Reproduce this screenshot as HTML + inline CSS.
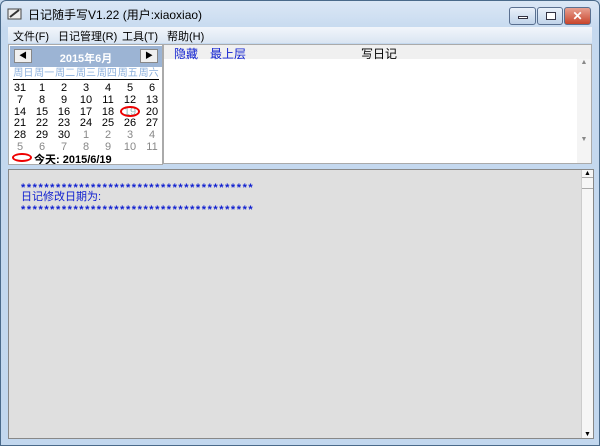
<!DOCTYPE html>
<html><head><meta charset="utf-8"><style>
*{margin:0;padding:0;box-sizing:border-box}
body{width:600px;height:446px;overflow:hidden;background:#c4d8ee;font-family:"Liberation Sans","Noto Sans CJK SC",sans-serif;font-size:12px;position:relative}
.frame{position:absolute;left:0;top:0;width:600px;height:446px;border:1px solid #4a6a8a;border-radius:6px 6px 0 0;background:linear-gradient(#dbe7f5,#c5d9ef 30px,#c2d7ee);}
.title{position:absolute;left:28px;top:6px;font-size:12px;color:#000}
.btn{position:absolute;top:7px;height:18px;border:1px solid #5a7090;border-radius:3px;background:linear-gradient(#eaf1fa,#c0d3ea)}
.menu{position:absolute;left:8px;top:27px;width:584px;height:16px;background:linear-gradient(#f2f6fb,#dae5f2);}
.menu span{position:absolute;top:1px;font-size:11px}
.cal{position:absolute;left:8px;top:44px;width:155px;height:121px;background:#fff;border:1px solid #aaa;overflow:hidden}
.calh{position:absolute;left:1px;top:1px;width:152px;height:21px;background:#9cb4d4}
.cb{position:absolute;top:3px;width:18px;height:14px;background:#f0f0f0;border:1px solid #888;font-size:8px;text-align:center;line-height:12px}
.grid{position:absolute;left:0;top:22px;width:154px}
.grid div{display:flex;height:11.8px}
.grid span{width:22px;text-align:center;font-size:11px;line-height:12px}
.g{color:#888}
.right{position:absolute;left:163px;top:44px;width:429px;height:120px;background:#fff;border:1px solid #aaa}
.rh{position:absolute;left:0;top:0;width:100%;height:14px;background:#f0f0f0}
.bot{position:absolute;left:8px;top:169px;width:586px;height:270px;background:#dfdfdf;border:1px solid #888}
.blue{color:#1020d0;font-size:11px;position:absolute;left:12px;line-height:12px}
.ast{font-weight:bold;letter-spacing:1.55px}
</style></head><body>
<div class="frame"></div>
<svg style="position:absolute;left:7px;top:7px" width="16" height="14"><rect x="1" y="2" width="13" height="10" fill="#eee" stroke="#444"/><path d="M3 10 L12 3" stroke="#333" stroke-width="2"/></svg>
<div class="title">日记随手写V1.22 (用户:xiaoxiao)</div>
<div class="btn" style="left:509px;width:27px"><div style="margin:8px 8px;width:10px;height:3px;background:#fff;border:1px solid #334"></div></div>
<div class="btn" style="left:537px;width:26px"><div style="margin:4px 8px;width:10px;height:8px;border:1px solid #334;background:#fff"></div></div>
<div class="btn" style="left:564px;width:27px;background:linear-gradient(#e8a090,#c8452c);color:#fff;text-align:center;font-weight:bold;line-height:16px">✕</div>
<div class="menu"><span style="left:5px">文件(F)</span><span style="left:50px">日记管理(R)</span><span style="left:114px">工具(T)</span><span style="left:159px">帮助(H)</span></div>
<div class="cal">
<div class="calh"><div class="cb" style="left:4px">◀</div><div style="position:absolute;left:0;width:152px;text-align:center;top:4px;color:#fff;font-weight:bold;font-size:11px">2015年6月</div><div class="cb" style="left:130px">▶</div></div>
<div class="grid">
<div style="color:#8cb0dc;border-bottom:1px solid #000;margin:0 4px 2px 4px;height:13px"><span style="font-size:10px;line-height:13px">周日</span><span style="font-size:10px;line-height:13px">周一</span><span style="font-size:10px;line-height:13px">周二</span><span style="font-size:10px;line-height:13px">周三</span><span style="font-size:10px;line-height:13px">周四</span><span style="font-size:10px;line-height:13px">周五</span><span style="font-size:10px;line-height:13px">周六</span></div>
<div><span>31</span><span>1</span><span>2</span><span>3</span><span>4</span><span>5</span><span>6</span></div>
<div><span>7</span><span>8</span><span>9</span><span>10</span><span>11</span><span>12</span><span>13</span></div>
<div><span>14</span><span>15</span><span>16</span><span>17</span><span>18</span><span style="color:#9bb;position:relative">19<i style="position:absolute;left:1px;top:0;width:20px;height:11px;border:2px solid #e00;border-radius:50%"></i></span><span>20</span></div>
<div><span>21</span><span>22</span><span>23</span><span>24</span><span>25</span><span>26</span><span>27</span></div>
<div><span>28</span><span>29</span><span>30</span><span class="g">1</span><span class="g">2</span><span class="g">3</span><span class="g">4</span></div>
<div><span class="g">5</span><span class="g">6</span><span class="g">7</span><span class="g">8</span><span class="g">9</span><span class="g">10</span><span class="g">11</span></div>
</div>
<div style="position:absolute;left:3px;top:108px;width:20px;height:9px;border:2px solid #e00;border-radius:50%"></div>
<div style="position:absolute;left:25px;top:106px;font-weight:bold;font-size:11px">今天: 2015/6/19</div>
</div>
<div class="right"><div class="rh"></div>
<span style="position:absolute;left:10px;top:0;color:#1020d0">隐藏</span><span style="position:absolute;left:46px;top:0;color:#1020d0">最上层</span><span style="position:absolute;left:197px;top:0">写日记</span>
<div style="position:absolute;right:0;top:14px;width:14px;height:104px;background:#f4f4f4;font-size:7px;color:#888;text-align:center">▲<br><br><br><br><br><br><br><br><br><br><br>▼</div>
</div>
<div class="bot">
<div class="blue ast" style="top:12px">****************************************</div>
<div class="blue" style="top:21px">日记修改日期为:</div>
<div class="blue ast" style="top:34px">****************************************</div>
<div style="position:absolute;right:0;top:0;width:12px;height:268px;background:#f6f6f6;border-left:1px solid #ccc"><div style="font-size:7px;text-align:center">▲</div><div style="border-top:1px solid #aaa;border-bottom:1px solid #aaa;height:12px"></div><div style="position:absolute;bottom:0;width:11px;font-size:7px;text-align:center">▼</div></div>
</div>
</body></html>
